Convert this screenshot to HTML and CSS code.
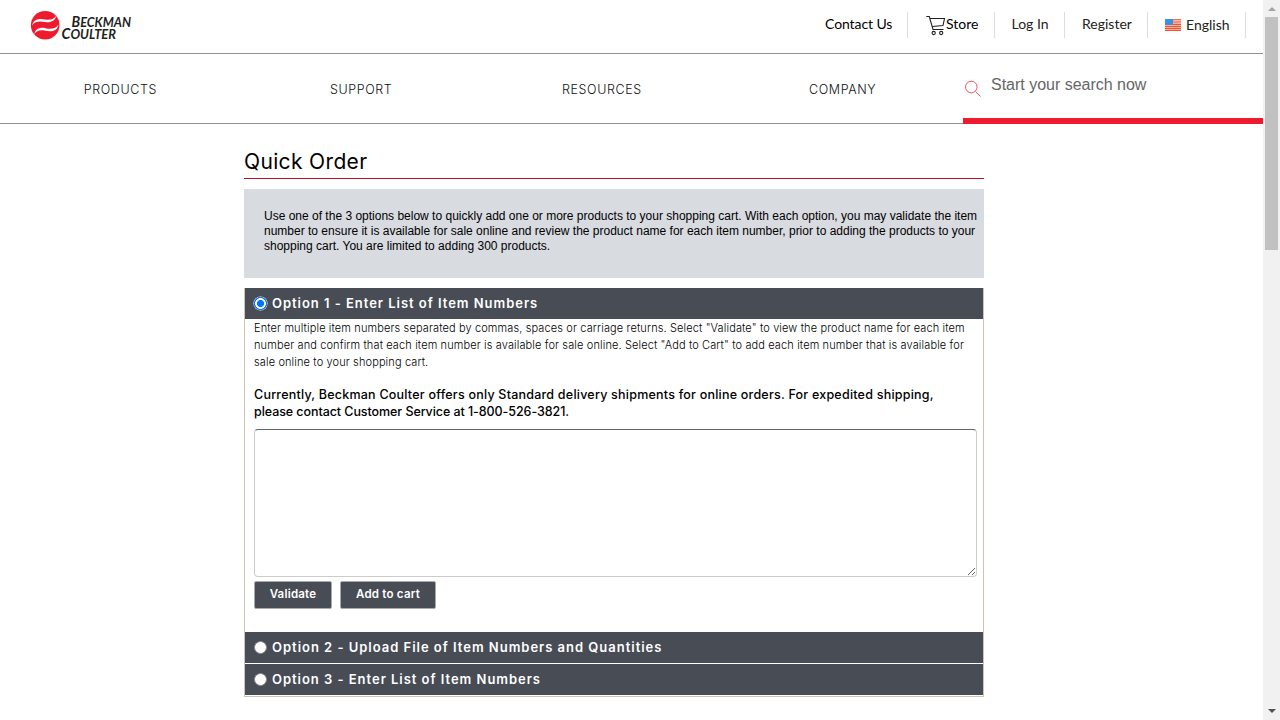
FILE: index.html
```html
<!DOCTYPE html>
<html lang="en">
<head>
<meta charset="utf-8">
<title>Quick Order</title>
<link rel="stylesheet" href="styles.css">
</head>
<body>
<div class="page">
  <header class="topbar">
    <svg class="logo" width="104" height="34" viewBox="0 0 104 34">
      <circle cx="15.2" cy="16.2" r="14.300" fill="#ed1b2d"/>
      <g fill="#fff"><path d="M2 16.500C4 9.500 10 9.500 15 10.500C20 11.500 24.500 10 26 7C25.500 12 20 14 15 13C10 12 5 12 2 16.500Z"/><path d="M4.500 25C5 20 10 18 15.500 19.200C21 20.400 26 20 28.500 15.500C27.500 22.500 21 23 15.500 21.800C10.500 20.700 6.500 21.500 4.500 25Z"/></g>
      <g class="logo-text"><text x="41.500" y="18.300" textLength="59.500" lengthAdjust="spacingAndGlyphs"><tspan class="cap">B</tspan>ECKMAN</text>
      <text x="31.500" y="29.500" textLength="54.500" lengthAdjust="spacingAndGlyphs"><tspan class="cap">C</tspan>OULTER</text></g>
    </svg>
    <nav class="account">
      <a class="item contact">Contact Us</a>
      <a class="item store"><svg width="20" height="21" viewBox="0 0 20 21" fill="none" stroke="#222" stroke-width="1.100"><path d="M.3 1.500H3.300L7 14.500H17.500M4.300 3.500H18.500L17 10.500L6.200 11.500"/><circle cx="7.700" cy="18" r="1.600"/><circle cx="15.200" cy="18" r="1.600"/></svg><span>Store</span></a>
      <a class="item login">Log In</a>
      <a class="item register">Register</a>
      <a class="item language"><svg width="16" height="12" viewBox="0 0 16 12"><path fill="#fbd3c8" d="M0 0h16v12H0z"/><path d="M0 .7h16M0 3h16M0 5.300h16M0 7.300h16M0 9.300h16M0 11.400h16" stroke="#f4512c" stroke-width="1.150"/><path fill="#3f8fe0" d="M0 0h8v6H0z"/></svg><span>English</span></a>
    </nav>
  </header>
  <div class="mainbar">
    <nav class="menu"><a>PRODUCTS</a><a>SUPPORT</a><a>RESOURCES</a><a>COMPANY</a></nav>
    <div class="search">
      <svg width="18" height="18" viewBox="0 0 18 18" fill="none" stroke="#ed4455" stroke-width=".9"><circle cx="7.300" cy="7" r="5.800"/><path d="M11.500 11.500L16.500 16.500"/></svg>
      <span>Start your search now</span>
    </div>
  </div>
  <main class="content">
    <h1>Quick Order</h1>
    <div class="notice">Use one of the 3 options below to quickly add one or more products to your shopping cart. With each option, you may validate the item<br>number to ensure it is available for sale online and review the product name for each item number, prior to adding the products to your<br>shopping cart. You are limited to adding 300 products.</div>
    <section class="options">
      <div class="option first"><i class="radio checked"></i><span>Option 1 - Enter List of Item Numbers</span></div>
      <div class="panel">
        <p class="help">Enter multiple item numbers separated by commas, spaces or carriage returns. Select "Validate" to view the product name for each item<br>number and confirm that each item number is available for sale online. Select "Add to Cart" to add each item number that is available for<br>sale online to your shopping cart.</p>
        <p class="shipping"><span class="lead">Currently, Beckman Coulter offers only Standard delivery shipments for online orders. For expedited shipping,</span><br><span class="phone">please contact Customer Service at 1-800-526-3821.</span></p>
        <textarea></textarea>
        <div class="actions"><button class="validate">Validate</button><button class="add">Add to cart</button></div>
      </div>
      <div class="option upload"><i class="radio"></i><span>Option 2 - Upload File of Item Numbers and Quantities</span></div>
      <div class="option"><i class="radio"></i><span>Option 3 - Enter List of Item Numbers</span></div>
    </section>
  </main>
</div>
<div class="scrollbar"><i class="up"></i><i class="thumb"></i><i class="down"></i></div>
</body>
</html>
```
FILE: styles.css
```css
*{box-sizing:border-box}
body{margin:0;width:1280px;height:720px;overflow:hidden;display:flex;background:#fff;font-family:Inter,"Liberation Sans",sans-serif;color:#000}
.page{width:1263px;height:720px}
.topbar{height:54px;border-bottom:1px solid #919191;display:flex;justify-content:space-between;padding:9px 17px 0 30px}
.logo{display:block}
.logo-text{font:italic bold 13px Lato,sans-serif;fill:#231f20}
.cap{font-size:14.5px}
.account{display:flex;padding-top:3px;font:14px/24px Lato,sans-serif;color:#222}
.item{height:26px;border-right:1px solid #ddd;display:flex;white-space:nowrap}
.contact{width:83px;color:#000;letter-spacing:-.08px}
.store{width:87px;padding-left:18px;color:#000}
.store svg{margin:3px 0 0 0}
.login{width:70px;padding-left:16.5px}
.register{width:83px;padding-left:17px}
.language{width:98px;padding-left:17px}
.language svg{margin:7px 5px 0 0}
.language span{padding-top:1px}
.mainbar{height:70px;border-bottom:1px solid #919191;display:flex}
.menu{width:963px;display:grid;grid-template-columns:repeat(4,1fr);text-align:center;font:300 12.5px/72px Inter,sans-serif;letter-spacing:.6px;color:#111}
.search{width:300px;height:70px;border-bottom:6px solid #ed1b2d;display:flex;font:16px/20px "Liberation Sans",sans-serif;color:#666;padding:21px 0 0 1px}
.search svg{margin:5px 9px 0 0}
.search span{letter-spacing:-.01px}
.content{width:740px;margin-left:244px;padding-top:24px}
h1{margin:0 0 10px;height:31px;border-bottom:1px solid #b5121b;font:21px/28px Inter,sans-serif;letter-spacing:.35px;white-space:nowrap}
.notice{height:89px;background:#d8dbe0;padding:20px 0 0 20px;font:12px/15px "Liberation Sans",sans-serif;white-space:nowrap}
.options{height:409px;margin-top:10px;border:1px solid #ccc4b5;border-top:0}
.option{height:31px;margin-bottom:1px;background:#484c55;color:#fff;display:flex;align-items:center;padding-left:9px;font-weight:600;font-size:13px;letter-spacing:.97px;white-space:nowrap}
.option span{padding-bottom:1px}
.option.upload{letter-spacing:.98px}
.option.first{margin:0}
.radio{width:13px;height:13px;border:1px solid #858585;border-radius:50%;background:#fff;margin-right:5px;flex:none}
.radio.checked{border:0;background:radial-gradient(circle,#0075ff 0 3.3px,#fff 3.8px 5.1px,#0075ff 5.6px);box-shadow:0 0 0 .5px #fff}
.panel{height:313px;padding:1px 0 0 9px;white-space:nowrap}
p{margin:0}
.help{height:66px;font-size:11px;line-height:17px;font-weight:300;letter-spacing:.125px;color:#000}
.shipping{height:43px;font-size:12.5px;line-height:17px;font-weight:500}
.lead{letter-spacing:.225px}
.phone{letter-spacing:-.07px}
textarea{display:block;width:723px;height:148px;border:1px solid #ccc;border-top-color:#666;border-radius:4px;background:#fff}
.actions{display:flex;gap:8px;padding-top:4px}
button{height:28px;border:1px solid #aaa;border-radius:2px;background:#484c55;color:#fff;padding:0 0 2px;font:600 11.5px Inter,sans-serif;letter-spacing:.22px;white-space:nowrap}
.validate{width:78px}
.add{width:96px}
.scrollbar{width:17px;height:720px;background:#f1f1f1;display:flex;flex-direction:column;align-items:center}
.up,.down{border:4px solid transparent}
.up{border-top:0;border-bottom-color:#a3a3a3;margin-top:7px}
.thumb{width:13px;height:233px;background:#c1c1c1;margin-top:6px}
.down{border-bottom:0;border-top-color:#505050;margin:auto 0 7px}
```
